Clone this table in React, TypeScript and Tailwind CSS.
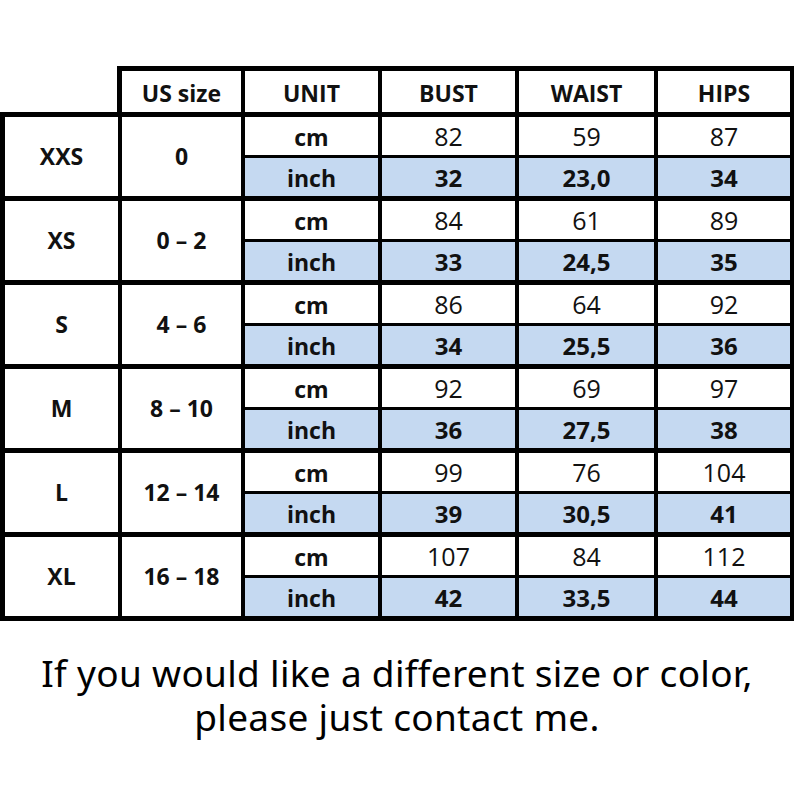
import React from "react";

type Group = { size: string; us: string; cm: string[]; inch: string[] };

const groups: Group[] = [
  { size: "XXS", us: "0", cm: ["82", "59", "87"], inch: ["32", "23,0", "34"] },
  { size: "XS", us: "0 – 2", cm: ["84", "61", "89"], inch: ["33", "24,5", "35"] },
  { size: "S", us: "4 – 6", cm: ["86", "64", "92"], inch: ["34", "25,5", "36"] },
  { size: "M", us: "8 – 10", cm: ["92", "69", "97"], inch: ["36", "27,5", "38"] },
  { size: "L", us: "12 – 14", cm: ["99", "76", "104"], inch: ["39", "30,5", "41"] },
  { size: "XL", us: "16 – 18", cm: ["107", "84", "112"], inch: ["42", "33,5", "44"] },
];

const font = { fontFamily: "'Open Sans', 'Noto Sans', sans-serif" };

export default function App() {
  return (
    <div className="w-[794px] h-[795px] bg-white overflow-hidden text-[#111]" style={font}>
      <div className="h-[66px]" />
      {/* Header */}
      <div className="ml-[117px] bg-black pt-[5px] pl-[5px] pr-[4px] grid grid-cols-[119px_133px_133px_135px_132px] gap-x-[4px]">
        {["US size", "UNIT", "BUST", "WAIST", "HIPS"].map((h) => (
          <div key={h} className="bg-white h-[41px] pt-[3px] flex items-center justify-center text-[23px] font-bold">
            {h}
          </div>
        ))}
      </div>
      {/* Body */}
      <div className="bg-black p-[5px] pr-[4px] flex flex-col gap-[5px]">
        {groups.map((g) => (
          <div
            key={g.size}
            className="grid grid-cols-[113px_119px_133px_133px_135px_132px] grid-rows-[38px_38px] gap-x-[4px] gap-y-[3px]"
          >
            <div className="row-span-2 bg-white flex items-center justify-center text-[23px] font-bold">
              {g.size}
            </div>
            <div className="row-span-2 bg-white flex items-center justify-center text-[23px] font-bold">
              {g.us}
            </div>
            <div className="bg-white pt-[3px] flex items-center justify-center text-[23px] font-bold">cm</div>
            {g.cm.map((v, i) => (
              <div key={"c" + i} className="bg-white pt-[2px] flex items-center justify-center text-[25px]">
                {v}
              </div>
            ))}
            <div className="bg-[#c5d9f1] pt-[3px] flex items-center justify-center text-[23px] font-bold">inch</div>
            {g.inch.map((v, i) => (
              <div key={"i" + i} className="bg-[#c5d9f1] pt-[2px] flex items-center justify-center text-[24px] font-bold">
                {v}
              </div>
            ))}
          </div>
        ))}
      </div>
      {/* Footer */}
      <div
        className="mt-[30px] text-center text-[37px] leading-[44px] tracking-[0.3px] text-black"
        style={{ fontFamily: "'Noto Sans', sans-serif" }}
      >
        <div>If you would like a different size or color,</div>
        <div>please just contact me.</div>
      </div>
    </div>
  );
}
